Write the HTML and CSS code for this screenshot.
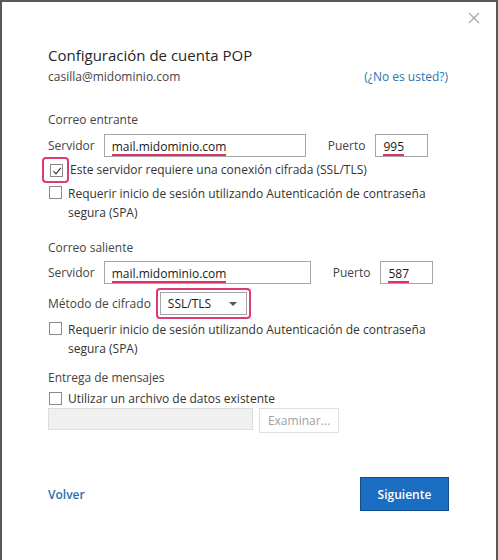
FILE: index.html
```html
<!DOCTYPE html>
<html lang="es">
<head>
<meta charset="utf-8">
<link rel="stylesheet" href="styles.css">
</head>
<body>
<div class="window">
  <button class="close" aria-label="Cerrar">
    <svg width="12" height="12" viewBox="0 0 12 12"><path d="M1 1 L11 11 M11 1 L1 11" stroke="#a8a8a8" stroke-width="1.3" fill="none"/></svg>
  </button>
  <h1 class="title">Configuración de cuenta POP</h1>
  <div class="account">
    <span class="email">casilla@midominio.com</span>
    <a class="link notyou">(¿No es usted?)</a>
  </div>

  <section class="group incoming">
    <div class="group-title">Correo entrante</div>
    <div class="server-row">
      <span class="label">Servidor</span>
      <div class="input server"><span class="mark">mail.midominio.com</span></div>
      <span class="label port-label">Puerto</span>
      <div class="input port"><span class="mark">995</span></div>
    </div>
    <label class="check hl-check">
      <span class="box-wrap"><span class="box checked">
        <svg width="10" height="10" viewBox="0 0 10 10"><path d="M1.5 5.2 L4 7.8 L8.8 1.8" stroke="#333" stroke-width="1.1" fill="none"/></svg>
      </span></span>
      <span class="check-text">Este servidor requiere una conexión cifrada (SSL/TLS)</span>
    </label>
    <label class="check spa-in">
      <span class="box"></span>
      <span class="check-text">Requerir inicio de sesión utilizando Autenticación de contraseña segura (SPA)</span>
    </label>
  </section>

  <section class="group outgoing">
    <div class="group-title">Correo saliente</div>
    <div class="server-row">
      <span class="label">Servidor</span>
      <div class="input server wide"><span class="mark">mail.midominio.com</span></div>
      <span class="label port-label">Puerto</span>
      <div class="input port"><span class="mark">587</span></div>
    </div>
    <div class="method-row">
      <span class="label">Método de cifrado</span>
      <div class="select-hl">
        <div class="select"><span>SSL/TLS</span>
          <svg width="8" height="4" viewBox="0 0 8 4"><path d="M0 0 L8 0 L4 4 Z" fill="#555"/></svg>
        </div>
      </div>
    </div>
    <label class="check spa-out">
      <span class="box"></span>
      <span class="check-text">Requerir inicio de sesión utilizando Autenticación de contraseña segura (SPA)</span>
    </label>
  </section>

  <section class="group delivery">
    <div class="group-title">Entrega de mensajes</div>
    <label class="check use-file">
      <span class="box"></span>
      <span class="check-text">Utilizar un archivo de datos existente</span>
    </label>
    <div class="file-row">
      <div class="file-input"></div>
      <button class="browse" disabled>Examinar...</button>
    </div>
  </section>

  <footer class="footer">
    <a class="link back">Volver</a>
    <button class="next">Siguiente</button>
  </footer>
</div>
</body>
</html>
```
FILE: styles.css
```css
* { box-sizing: border-box; }
html, body { margin: 0; padding: 0; background: #fff; }
body {
  font-family: "Open Sans", "Noto Sans", "Liberation Sans", sans-serif;
  font-size: 12px;
  color: #333;
}
.window {
  position: relative;
  width: 498px;
  height: 560px;
  border: 2px solid #595959;
  border-bottom: none;
  padding: 0 0 0 46px;
}
.close {
  position: absolute;
  top: 9px;
  right: 15px;
  background: none;
  border: none;
  padding: 0;
  width: 14px;
  height: 14px;
  display: flex;
  align-items: center;
  justify-content: center;
}
.title {
  margin: 42px 0 0 0;
  font-size: 15px;
  font-weight: 400;
  color: #262626;
  line-height: 22px;
}
.account {
  display: flex;
  justify-content: space-between;
  width: 400px;
  margin-top: 2px;
  line-height: 18px;
}
.email { color: #444; }
.link { color: #2a74b8; cursor: pointer; }
.group-title { color: #444; line-height: 18px; }
.incoming { margin-top: 25px; }
.outgoing { margin-top: 17px; }
.delivery { margin-top: 11px; }
.server-row {
  display: flex;
  align-items: center;
  margin-top: 5px;
  height: 23px;
}
.outgoing .server-row { margin-top: 4px; }
.label { color: #444; }
.input {
  height: 23px;
  border: 1px solid #a6a6a6;
  display: flex;
  align-items: center;
  padding-left: 7px;
  color: #1a1a1a;
}
.server { width: 202px; margin-left: 9px; }
.server.wide { width: 207px; }
.port-label { margin-left: 22px; }
.port { width: 53px; margin-left: 10px; }
.mark {
  border-bottom: 2px solid #d8336c;
  line-height: 15px;
  margin-top: 3px;
}
.check {
  display: flex;
  align-items: flex-start;
  margin-top: 6px;
}
.box {
  flex: none;
  width: 13px;
  height: 13px;
  border: 1px solid #8a8a8a;
  margin: 2px 6px 0 1px;
  display: flex;
  align-items: center;
  justify-content: center;
  background: #fff;
}
.check-text { width: 360px; line-height: 18px; color: #333; }
.spa-in { margin-top: 1px; }
.spa-in .check-text, .spa-out .check-text { line-height: 19px; }
.hl-check { margin-top: 0; align-items: center; }
.box-wrap {
  flex: none;
  margin: 0 1px 0 -6px;
  padding: 5px 4px 4px 6px;
  border: 2px solid #e03a74;
  border-radius: 4px;
  display: flex;
}
.box-wrap .box { margin: 0; }
.method-row {
  display: flex;
  align-items: center;
  margin-top: 4px;
}
.select-hl {
  margin-left: 5px;
  border: 2px solid #e03a74;
  border-radius: 4px;
  padding: 2px;
}
.select {
  width: 87px;
  height: 23px;
  border: 1px solid #a6a6a6;
  display: flex;
  align-items: center;
  justify-content: space-between;
  padding: 0 9px 0 7px;
  color: #1a1a1a;
}
.spa-out { margin-top: 1px; }
.use-file { margin-top: 3px; }
.file-row {
  display: flex;
  align-items: flex-start;
  margin-top: 0;
}
.file-input {
  width: 205px;
  height: 22px;
  background: #f0f0f0;
  border: 1px solid #dcdcdc;
}
.browse {
  margin-left: 6px;
  width: 80px;
  height: 25px;
  background: #fff;
  border: 1px solid #e0e0e0;
  color: #a0a0a0;
  font: inherit;
  padding: 0;
}
.footer {
  display: flex;
  justify-content: space-between;
  align-items: center;
  width: 401px;
  margin-top: 44px;
}
.back { font-weight: 600; color: #2a6fad; }
.next {
  width: 89px;
  height: 34px;
  background: #1b6dc1;
  border: 1px solid #0f4e8f;
  color: #fff;
  font: inherit;
  font-weight: 600;
}
```
